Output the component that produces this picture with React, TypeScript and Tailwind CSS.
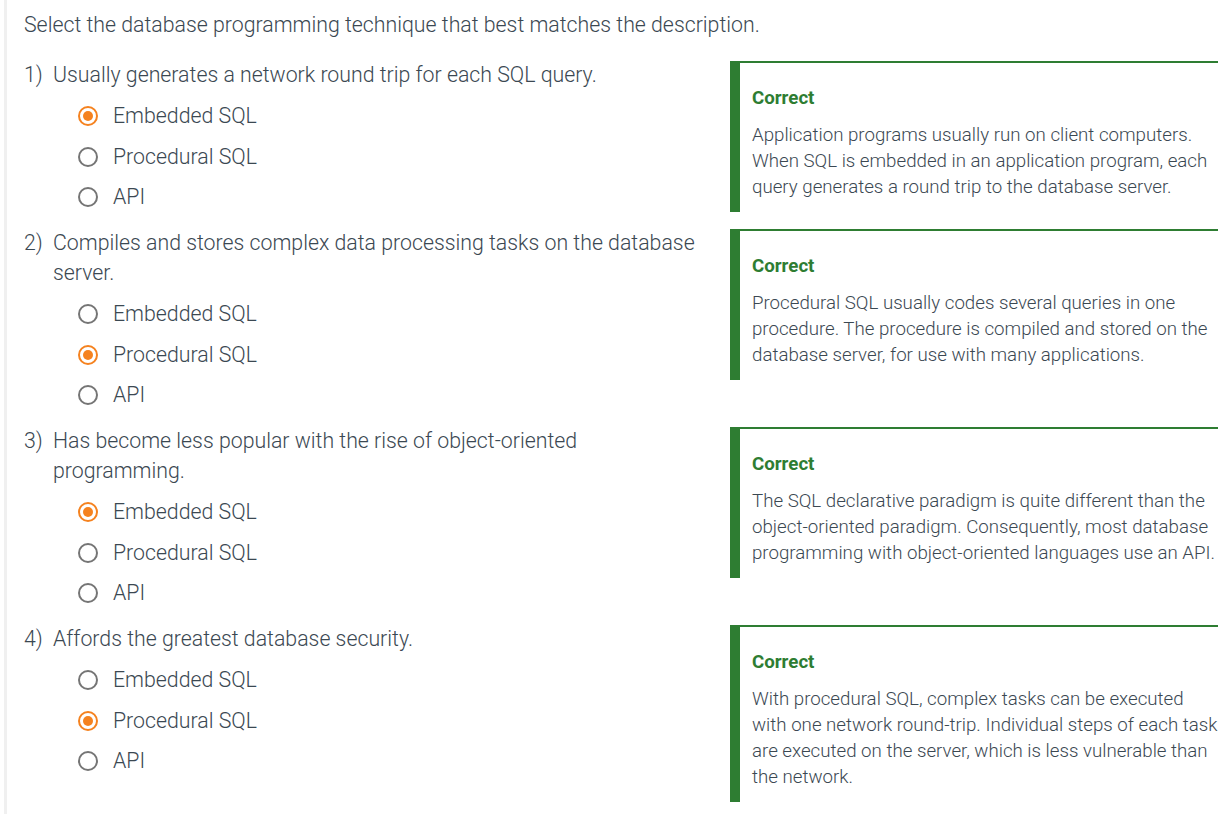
import React from 'react';

interface Question {
  num: number;
  text: string;
  selected: number;
  explanation: string;
}

const options = ['Embedded SQL', 'Procedural SQL', 'API'];

const questions: Question[] = [
  {
    num: 1,
    text: 'Usually generates a network round trip for each SQL query.',
    selected: 0,
    explanation:
      'Application programs usually run on client computers. When SQL is embedded in an application program, each query generates a round trip to the database server.',
  },
  {
    num: 2,
    text: 'Compiles and stores complex data processing tasks on the database server.',
    selected: 1,
    explanation:
      'Procedural SQL usually codes several queries in one procedure. The procedure is compiled and stored on the database server, for use with many applications.',
  },
  {
    num: 3,
    text: 'Has become less popular with the rise of object-oriented programming.',
    selected: 0,
    explanation:
      'The SQL declarative paradigm is quite different than the object-oriented paradigm. Consequently, most database programming with object-oriented languages use an API.',
  },
  {
    num: 4,
    text: 'Affords the greatest database security.',
    selected: 1,
    explanation:
      'With procedural SQL, complex tasks can be executed with one network round-trip. Individual steps of each task are executed on the server, which is less vulnerable than the network.',
  },
];

const Radio: React.FC<{ checked: boolean }> = ({ checked }) =>
  checked ? (
    <span className="flex h-5 w-5 shrink-0 items-center justify-center rounded-full border-2 border-[#f5821f]">
      <span className="h-[10px] w-[10px] rounded-full bg-[#f5821f]" />
    </span>
  ) : (
    <span className="h-5 w-5 shrink-0 rounded-full border-2 border-[#757575]" />
  );

const QuestionRow: React.FC<{ q: Question }> = ({ q }) => (
  <div className="flex items-start mb-[10.5px]">
    <div className="w-[706px] shrink-0 pr-3">
      <div className="flex text-[21.3px] leading-[30px]">
        <span className="w-[29px] shrink-0">{q.num})</span>
        <span className="w-[650px]">{q.text}</span>
      </div>
      <div className="mt-[6px] pl-[54px]">
        {options.map((o, i) => (
          <div key={o} className="flex h-[40.5px] items-center gap-[15px]">
            <Radio checked={q.selected === i} />
            <span className="text-[21.3px]">{o}</span>
          </div>
        ))}
      </div>
    </div>
    <div className="mt-[1px] flex-1 border-t-2 border-l-[10px] border-[#2e7d32] pl-3 pt-[23px] pb-[12px]">
      <div className="text-[18.7px] font-bold leading-[24px] text-[#2e7d32]">Correct</div>
      <p className="mt-[12px] text-[18.7px] leading-[26px]">{q.explanation}</p>
    </div>
  </div>
);

export default function App() {
  return (
    <div
      className="min-h-screen bg-white pl-[4px] text-[#3b4852]"
      style={{ fontFamily: 'Roboto, "Noto Sans", sans-serif' }}
    >
      <div className="min-h-screen border-l-[3px] border-[#f0f0f0] pl-[17px] pr-[10px] font-light">
        <div className="pt-[12px] text-[21.3px] leading-[26px]">
          Select the database programming technique that best matches the description.
        </div>
        <div className="mt-[22px]">
          {questions.map((q) => (
            <QuestionRow key={q.num} q={q} />
          ))}
        </div>
      </div>
    </div>
  );
}
